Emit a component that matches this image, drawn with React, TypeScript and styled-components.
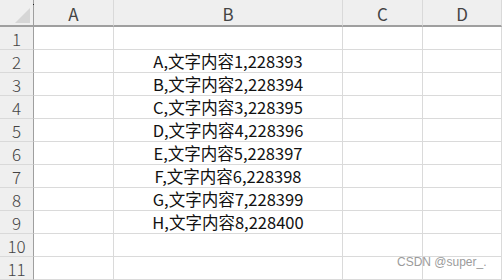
import React from 'react'
import styled, { createGlobalStyle } from 'styled-components'

const GlobalStyle = createGlobalStyle`
  html, body {
    margin: 0;
    padding: 0;
    background: #ffffff;
  }
  body {
    font-family: "Noto Sans CJK SC", "Noto Sans", sans-serif;
  }
`

const columns = ['A', 'B', 'C', 'D']
const rows = Array.from({ length: 11 }, (_, i) => i + 1)

const cellText = (row: number, col: string) => {
  if (col !== 'B' || row < 2 || row > 9) return ''
  const n = row - 1
  return `${String.fromCharCode(64 + n)},文字内容${n},${228392 + n}`
}

export default function App() {
  return (
    <>
      <GlobalStyle />
      <Sheet>
        <Grid>
          <Corner>
            <CornerMark />
          </Corner>
          {columns.map((c) => (
            <ColHeader key={c}>{c}</ColHeader>
          ))}
          {rows.map((r) => (
            <React.Fragment key={r}>
              <RowHeader>{r}</RowHeader>
              {columns.map((c) => (
                <Cell key={c}>{cellText(r, c)}</Cell>
              ))}
            </React.Fragment>
          ))}
        </Grid>
        <Watermark>CSDN @super_.</Watermark>
      </Sheet>
    </>
  )
}

const Sheet = styled.div`
  position: relative;
  width: 502px;
  height: 280px;
  overflow: hidden;
  background: #ffffff;
`

const Grid = styled.div`
  display: grid;
  grid-template-columns: 34px 80px 229px 80px 1fr;
  grid-template-rows: 27px repeat(11, 23px);
`

const HeaderBase = styled.div`
  box-sizing: border-box;
  background: #efefef;
  color: #444444;
  font-size: 17px;
  display: flex;
  align-items: center;
  justify-content: center;
`

const Corner = styled(HeaderBase)`
  position: relative;
  border-right: 1px solid #9f9f9f;
  border-bottom: 2px solid #9f9f9f;

  &::before {
    content: '';
    position: absolute;
    right: -1px;
    top: 4px;
    width: 1px;
    height: 1px;
    background: #222222;
  }
`

const CornerMark = styled.div`
  position: absolute;
  left: 15px;
  top: 8px;
  width: 15px;
  height: 15px;
  background: #d6d6d6;
  clip-path: polygon(100% 0, 100% 100%, 0 100%);
`

const ColHeader = styled(HeaderBase)`
  border-right: 1px solid #d9d9d9;
  border-bottom: 2px solid #9f9f9f;
  padding-top: 1px;
`

const RowHeader = styled(HeaderBase)`
  border-right: 1px solid #9f9f9f;
  border-bottom: 1px solid #d9d9d9;
  font-weight: 300;
`

const Cell = styled.div`
  box-sizing: border-box;
  border-right: 1px solid #dadada;
  border-bottom: 1px solid #dadada;
  color: #111111;
  font-size: 16.5px;
  display: flex;
  align-items: center;
  justify-content: center;
  white-space: nowrap;
  overflow: hidden;
`

const Watermark = styled.div`
  position: absolute;
  left: 397px;
  top: 255px;
  font-family: "Liberation Sans", Arial, sans-serif;
  font-size: 12px;
  color: #9b9b9b;
`
